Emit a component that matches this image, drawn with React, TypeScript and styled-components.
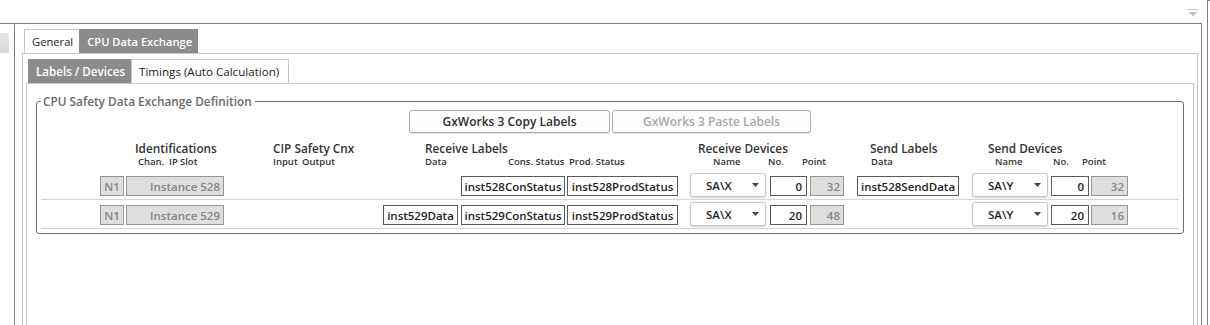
import React from 'react';
import styled, { createGlobalStyle } from 'styled-components';

const GlobalStyle = createGlobalStyle`
    html, body {
        margin: 0;
        padding: 0;
        background: #ffffff;
    }
    body {
        font-family: 'Open Sans', 'Noto Sans', sans-serif;
        font-size: 12px;
        color: #222222;
    }
    * {
        box-sizing: border-box;
    }
`;

type Header = { title: string; w: number; pad: number; subs: [string, number][] };

const headers: Header[] = [
    { title: 'Identifications', w: 138, pad: 3, subs: [['Chan.', 31], ['IP', 11], ['Slot', 0]] },
    { title: 'CIP Safety Cnx', w: 152, pad: 0, subs: [['Input', 29], ['Output', 0]] },
    { title: 'Receive Labels', w: 273, pad: 0, subs: [['Data', 83], ['Cons. Status', 61], ['Prod. Status', 0]] },
    { title: 'Receive Devices', w: 172, pad: 15, subs: [['Name', 55], ['No.', 34], ['Point', 0]] },
    { title: 'Send Labels', w: 118, pad: 1, subs: [['Data', 0]] },
    { title: 'Send Devices', w: 140, pad: 7, subs: [['Name', 58], ['No.', 29], ['Point', 0]] },
];

type Row = {
    chan: string;
    inst: string;
    data?: string;
    cons: string;
    prod: string;
    rname: string;
    rno: string;
    rpoint: string;
    sdata?: string;
    sname: string;
    sno: string;
    spoint: string;
};

const rows: Row[] = [
    {
        chan: 'N1',
        inst: 'Instance 528',
        cons: 'inst528ConStatus',
        prod: 'inst528ProdStatus',
        rname: 'SA\\X',
        rno: '0',
        rpoint: '32',
        sdata: 'inst528SendData',
        sname: 'SA\\Y',
        sno: '0',
        spoint: '32',
    },
    {
        chan: 'N1',
        inst: 'Instance 529',
        data: 'inst529Data',
        cons: 'inst529ConStatus',
        prod: 'inst529ProdStatus',
        rname: 'SA\\X',
        rno: '20',
        rpoint: '48',
        sname: 'SA\\Y',
        sno: '20',
        spoint: '16',
    },
];

const FilterIcon = () => (
    <svg width="10" height="10" viewBox="0 0 10 10">
        <rect x="0.5" y="1" width="9" height="1.2" fill="#c4c4c4" />
        <path d="M0.5 4 L9.5 4 L5 8.5 Z" fill="#c4c4c4" />
    </svg>
);

const Arrow = () => (
    <svg width="7" height="4" viewBox="0 0 7 4">
        <path d="M0 0 L7 0 L3.5 4 Z" fill="#444444" />
    </svg>
);

const App = () => {
    return (
        <Window>
            <GlobalStyle />
            <Main>
                <TopStrip>
                    <FilterIcon />
                </TopStrip>
                <Frame>
                    <LeftPanel>
                        <LeftItem />
                    </LeftPanel>
                    <Content>
                        <TabStrip>
                            <Tab $size={11.2}>General</Tab>
                            <Tab $size={11.2} $active>
                                CPU Data Exchange
                            </Tab>
                        </TabStrip>
                        <TabBody>
                            <TabStrip>
                                <Tab $size={11.6} $active>
                                    Labels / Devices
                                </Tab>
                                <Tab $size={11.6} $last>
                                    Timings (Auto Calculation)
                                </Tab>
                            </TabStrip>
                            <InnerBody>
                                <Group>
                                    <Legend>CPU Safety Data Exchange Definition</Legend>
                                    <ButtonRow>
                                        <Button $w={201}>GxWorks 3 Copy Labels</Button>
                                        <Button $w={199} $disabled>
                                            GxWorks 3 Paste Labels
                                        </Button>
                                    </ButtonRow>
                                    <HeaderRow>
                                        {headers.map((h) => (
                                            <HeaderGroup key={h.title} $w={h.w}>
                                                <HeaderTitle>{h.title}</HeaderTitle>
                                                <SubRow $pad={h.pad}>
                                                    {h.subs.map(([label, w]) => (
                                                        <SubLabel key={label} $w={w}>
                                                            {label}
                                                        </SubLabel>
                                                    ))}
                                                </SubRow>
                                            </HeaderGroup>
                                        ))}
                                    </HeaderRow>
                                    {rows.map((r) => (
                                        <DataRow key={r.inst}>
                                            <ReadBox $col="chan" $align="center">
                                                {r.chan}
                                            </ReadBox>
                                            <ReadBox $col="inst" $align="right">
                                                {r.inst}
                                            </ReadBox>
                                            {r.data && <LabelBox $col="rdata">{r.data}</LabelBox>}
                                            <LabelBox $col="rcons">{r.cons}</LabelBox>
                                            <LabelBox $col="rprod">{r.prod}</LabelBox>
                                            <Combo $col="rname">
                                                <ComboText>{r.rname}</ComboText>
                                                <Arrow />
                                            </Combo>
                                            <NumBox $col="rno">{r.rno}</NumBox>
                                            <ReadBox $col="rpoint" $align="right">
                                                {r.rpoint}
                                            </ReadBox>
                                            {r.sdata && <LabelBox $col="sdata">{r.sdata}</LabelBox>}
                                            <Combo $col="sname">
                                                <ComboText>{r.sname}</ComboText>
                                                <Arrow />
                                            </Combo>
                                            <NumBox $col="sno">{r.sno}</NumBox>
                                            <ReadBox $col="spoint" $align="right">
                                                {r.spoint}
                                            </ReadBox>
                                        </DataRow>
                                    ))}
                                </Group>
                            </InnerBody>
                        </TabBody>
                    </Content>
                </Frame>
            </Main>
            <RightStrip>
                <RightLine />
            </RightStrip>
        </Window>
    );
};

const Window = styled.div`
    display: flex;
    width: 1210px;
    height: 325px;
    overflow: hidden;
    background: #ffffff;
`;

const Main = styled.div`
    width: 1202px;
    display: flex;
    flex-direction: column;
`;

const TopStrip = styled.div`
    height: 23px;
    display: flex;
    justify-content: flex-end;
    align-items: flex-start;
    padding: 8px 4px 0 0;
`;

const Frame = styled.div`
    flex: 1;
    display: flex;
    border-top: 1px solid #808080;
    border-right: 1px solid #808080;
`;

const LeftPanel = styled.div`
    width: 15px;
    border-right: 1px solid #808080;
    padding-top: 9px;
`;

const LeftItem = styled.div`
    width: 9px;
    height: 20px;
    background: linear-gradient(#e8e8e8, #d6d6d6);
`;

const Content = styled.div`
    flex: 1;
    display: flex;
    flex-direction: column;
    padding: 5px 3px 0 7px;
`;

const TabStrip = styled.div`
    display: flex;
    padding-left: 2px;
`;

const Tab = styled.div<{ $size: number; $active?: boolean; $last?: boolean }>`
    height: 24px;
    display: flex;
    align-items: center;
    padding: ${(p) => (p.$last ? '0 9px 0 7px' : '0 6px 0 7px')};
    font-size: ${(p) => p.$size}px;
    font-weight: ${(p) => (p.$active ? 600 : 400)};
    color: ${(p) => (p.$active ? '#ffffff' : '#222222')};
    background: ${(p) => (p.$active ? '#8c8c8c' : '#ffffff')};
    border-top: 1px solid ${(p) => (p.$active ? '#8c8c8c' : '#c8c8c8')};
    border-left: 1px solid ${(p) => (p.$active ? '#8c8c8c' : '#c8c8c8')};
    border-right: ${(p) => (p.$last ? '1px solid #c8c8c8' : 'none')};
`;

const TabBody = styled.div`
    flex: 1;
    display: flex;
    flex-direction: column;
    border: 1px solid #c8c8c8;
    border-bottom: none;
    padding: 5px 3px 0 3px;
`;

const InnerBody = styled.div`
    flex: 1;
    border: 1px solid #c8c8c8;
    border-bottom: none;
    padding: 9px 9px 0 9px;
`;

const Group = styled.fieldset`
    margin: 0;
    padding: 1px 4px 4px 4px;
    border: 1px solid #6e6e6e;
    border-radius: 3px;
    min-width: 0;
`;

const Legend = styled.legend`
    padding: 0 3px 0 2px;
    font-size: 11.8px;
    line-height: 16px;
    font-weight: 600;
    color: #6a6a6a;
`;

const ButtonRow = styled.div`
    display: flex;
    justify-content: center;
    gap: 2px;
`;

const Button = styled.div<{ $w: number; $disabled?: boolean }>`
    width: ${(p) => p.$w}px;
    height: 23px;
    display: flex;
    align-items: center;
    justify-content: center;
    border: 1px solid #adadad;
    border-radius: 3px;
    background: #fdfdfd;
    box-shadow: 0 1px 1px rgba(0, 0, 0, 0.12);
    font-size: 12px;
    font-weight: 600;
    color: ${(p) => (p.$disabled ? '#a8a8a8' : '#2e2e2e')};
`;

const HeaderRow = styled.div`
    display: flex;
    padding-left: 94px;
    margin-top: 8px;
    margin-bottom: 3px;
`;

const HeaderGroup = styled.div<{ $w: number }>`
    width: ${(p) => p.$w}px;
    display: flex;
    flex-direction: column;
`;

const HeaderTitle = styled.div`
    font-size: 11.8px;
    line-height: 15px;
    font-weight: 600;
    color: #333333;
    white-space: nowrap;
`;

const SubRow = styled.div<{ $pad: number }>`
    display: flex;
    padding-left: ${(p) => p.$pad}px;
`;

const SubLabel = styled.div<{ $w: number }>`
    width: ${(p) => (p.$w ? `${p.$w}px` : 'auto')};
    font-size: 9.5px;
    line-height: 12px;
    font-weight: 600;
    color: #333333;
    white-space: nowrap;
`;

const DataRow = styled.div`
    display: grid;
    grid-template-columns:
        [chan] 24px 2px [inst] 98px 159px [rdata] 75px 3px [rcons] 104px 2px [rprod] 111px 12px
        [rname] 76px 4px [rno] 37px 3px [rpoint] 34px 13px [sdata] 102px 13px [sname] 76px 3px
        [sno] 38px 2px [spoint] 37px;
    align-items: end;
    height: 29px;
    padding: 0 0 3px 59px;
    border-bottom: 1px solid #d4d4d4;
`;

const Cell = styled.div<{ $col: string }>`
    grid-column: ${(p) => p.$col} / span 1;
    height: 20px;
    display: flex;
    align-items: center;
    font-size: 11.5px;
    font-weight: 600;
    white-space: nowrap;
    overflow: hidden;
`;

const ReadBox = styled(Cell)<{ $align: 'center' | 'right' }>`
    justify-content: ${(p) => (p.$align === 'center' ? 'center' : 'flex-end')};
    padding: 0 3px;
    background: #dedede;
    border: 1px solid #969696;
    color: #858585;
`;

const LabelBox = styled(Cell)`
    justify-content: center;
    padding: 0 2px;
    background: #ffffff;
    border: 1px solid #5a5a5a;
    color: #1e1e1e;
`;

const NumBox = styled(Cell)`
    justify-content: flex-end;
    padding: 0 4px;
    background: #ffffff;
    border: 1px solid #5a5a5a;
    color: #1e1e1e;
`;

const Combo = styled(Cell)`
    height: 24px;
    margin-bottom: -1px;
    justify-content: space-between;
    padding: 0 6px 0 15px;
    background: #ffffff;
    border: 1px solid #c6c6c6;
    border-radius: 3px;
    box-shadow: 0 1px 2px rgba(0, 0, 0, 0.18);
`;

const ComboText = styled.span`
    color: #1e1e1e;
    font-weight: 600;
`;

const RightStrip = styled.div`
    width: 8px;
    padding-left: 5px;
`;

const RightLine = styled.div`
    height: 100%;
    border-left: 1px solid #808080;
    border-top: 1px solid #808080;
`;

export default App;
